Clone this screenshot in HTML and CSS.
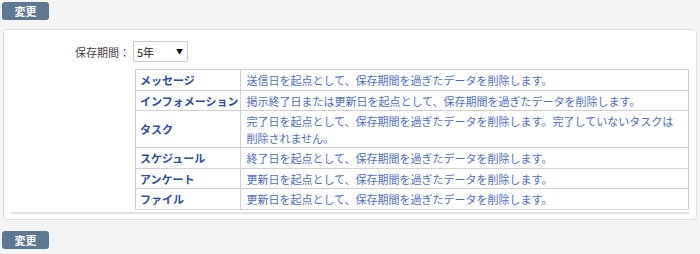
FILE: index.html
```html
<!DOCTYPE html>
<html lang="ja">
<head>
    <meta charset="UTF-8">
    <title>保存期間の設定</title>
    <link rel="stylesheet" href="styles.css">
</head>
<body>
    <div class="actions">
        <button type="button" class="btn">変更</button>
    </div>

    <div class="panel">
        <div class="form-row">
            <label class="form-label" for="period">保存期間：</label>
            <span class="select-wrap">
                <select id="period" class="select">
                    <option>1年</option>
                    <option>3年</option>
                    <option selected>5年</option>
                    <option>10年</option>
                </select>
            </span>
        </div>

        <table class="info-table">
            <tr>
                <th>メッセージ</th>
                <td>送信日を起点として、保存期間を過ぎたデータを削除します。</td>
            </tr>
            <tr>
                <th>インフォメーション</th>
                <td>掲示終了日または更新日を起点として、保存期間を過ぎたデータを削除します。</td>
            </tr>
            <tr>
                <th>タスク</th>
                <td>完了日を起点として、保存期間を過ぎたデータを削除します。完了していないタスクは削除されません。</td>
            </tr>
            <tr>
                <th>スケジュール</th>
                <td>終了日を起点として、保存期間を過ぎたデータを削除します。</td>
            </tr>
            <tr>
                <th>アンケート</th>
                <td>更新日を起点として、保存期間を過ぎたデータを削除します。</td>
            </tr>
            <tr>
                <th>ファイル</th>
                <td>更新日を起点として、保存期間を過ぎたデータを削除します。</td>
            </tr>
        </table>

        <div class="divider"></div>
    </div>

    <div class="actions actions-bottom">
        <button type="button" class="btn">変更</button>
    </div>
</body>
</html>
```

FILE: styles.css
```css
body {
    margin: 0;
    background-color: #f4f4f4;
    font-family: "Noto Sans CJK JP", "Noto Sans", sans-serif;
    font-size: 11px;
    color: #444;
}

.actions {
    padding: 2px 2px 0;
}

.actions-bottom {
    padding-top: 11px;
}

.btn {
    display: block;
    width: 47px;
    height: 18px;
    padding: 0;
    border: none;
    border-radius: 3px;
    background-color: #5f7892;
    color: #fff;
    font-family: inherit;
    font-size: 11px;
    font-weight: bold;
    line-height: 18px;
    cursor: pointer;
}

.panel {
    margin: 9px 3px 0;
    padding: 11px 7px 5px;
    background-color: #fff;
    border: 1px solid #e0e0e0;
    border-radius: 4px;
}

.form-row {
    display: grid;
    grid-template-columns: 119px auto;
    column-gap: 3px;
    align-items: center;
    justify-content: start;
}

.form-label {
    text-align: right;
    color: #444;
}

.select-wrap {
    position: relative;
    display: block;
    width: 55px;
    height: 21px;
}

.select {
    width: 55px;
    height: 21px;
    padding: 0 0 0 3px;
    border: 1px solid #ccc;
    border-radius: 2px;
    background-color: #fff;
    color: #222;
    font-family: inherit;
    font-size: 11px;
    appearance: none;
    -webkit-appearance: none;
}

.select-wrap::after {
    content: "▼";
    position: absolute;
    right: 5px;
    top: 5px;
    font-size: 7px;
    color: #111;
    pointer-events: none;
}

.info-table {
    margin: 7px 0 0 124px;
    width: calc(100% - 124px);
    border-collapse: collapse;
    border: 1px solid #d2d2d2;
}

.info-table th,
.info-table td {
    padding: 2px 5px 1px;
    border: 1px solid #d2d2d2;
    line-height: 16.5px;
    text-align: left;
    vertical-align: middle;
}

.info-table th {
    width: 96px;
    padding-left: 4px;
    padding-right: 2px;
    white-space: nowrap;
    color: #2d4ba6;
    font-weight: bold;
}

.info-table td {
    color: #4e6dcc;
}

.divider {
    height: 2px;
    margin-top: 2px;
    background-color: #dde2e7;
}
```
